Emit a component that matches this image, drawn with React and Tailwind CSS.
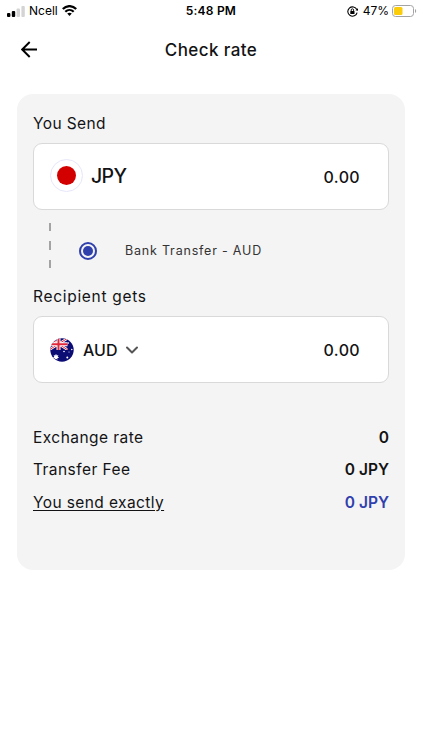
import { ChevronDown } from 'lucide-react'

const ROWS = [
  { label: 'Exchange rate', value: '0' },
  { label: 'Transfer Fee', value: '0 JPY' },
  { label: 'You send exactly', value: '0 JPY', highlight: true },
]

function StatusBar() {
  return (
    <div className="grid h-[22px] grid-cols-3 items-center text-black">
      <div className="flex items-center pl-[7px]">
        <svg width="18" height="11" viewBox="0 0 18 11">
          <rect x="0" y="7" width="3.4" height="4" rx="1" />
          <rect x="4.8" y="5" width="3.4" height="6" rx="1" />
          <rect x="9.6" y="2.5" width="3.4" height="8.5" rx="1" fill="#d4d4d4" />
          <rect x="14.4" y="0" width="3.4" height="11" rx="1" fill="#d4d4d4" />
        </svg>
        <span className="ml-1 text-[12px]">Ncell</span>
        <svg className="-mt-px ml-[4px]" width="15" height="11" viewBox="0 0 15 11" fill="none" stroke="#000" strokeWidth="2.2">
          <path d="M.8 4C4.6.1 10.4.1 14.2 4" />
          <path d="M3.3 6.7c2.4-2.3 6-2.3 8.4 0" />
          <path d="M7.5 11 5.2 8.6c1.3-1.2 3.3-1.2 4.6 0Z" fill="#000" stroke="none" />
        </svg>
      </div>
      <span className="text-center text-[12px] font-semibold tracking-[0.2px]">5:48 PM</span>
      <div className="flex items-center justify-end pr-[5px]">
        <svg width="11" height="11" viewBox="0 0 11 11" fill="none" stroke="#000">
          <path d="M9.8 3.6A4.7 4.7 0 1 0 10.1 6.6" strokeWidth="1.1" />
          <path d="m8.4 4.2 2.6.6V2.2Z" fill="#000" stroke="none" />
          <rect x="3.3" y="5" width="4.2" height="3.1" rx=".5" fill="#000" stroke="none" />
          <path d="M4.2 5V4a1.2 1.2 0 0 1 2.4 0v1" strokeWidth=".9" />
        </svg>
        <span className="ml-[5px] text-[12px]">47%</span>
        <svg className="-mt-px ml-[3px]" width="25" height="12" viewBox="0 0 25 12">
          <rect x=".5" y=".5" width="21" height="11" rx="3" fill="none" stroke="#a3a3a3" />
          <rect x="2" y="2" width="8.5" height="8" rx="1.5" fill="#fbcc0a" />
          <path d="M23 4v4c1.6-.6 1.6-3.4 0-4Z" fill="#a3a3a3" />
        </svg>
      </div>
    </div>
  )
}

function AustraliaFlag() {
  return (
    <svg width="24" height="24" viewBox="0 0 24 24">
      <clipPath id="au"><circle cx="12" cy="12" r="11.7" /></clipPath>
      <clipPath id="jack"><path d="M0 0h17.5v12H0z" /></clipPath>
      <g clipPath="url(#au)">
        <path fill="#0c0c75" d="M0 0h24v24H0z" />
        <g clipPath="url(#jack)">
          <path d="M-1 0 18 12M18 0-1 12" stroke="#fff" strokeWidth="2.4" />
          <path d="M-1 0 18 12M18 0-1 12" stroke="#e0263a" strokeWidth="1" />
          <path d="M8.5 0v12.5M0 6.3h18" stroke="#fff" strokeWidth="4" />
          <path d="M8.5 0v12.5M0 6.3h18" stroke="#e0263a" strokeWidth="2" />
        </g>
        <path fill="#fff" d="m6 15.8.8 1.6 1.7-.4-.8 1.6 1.4 1.1-1.7.4v1.7L6 20.7l-1.4 1.1v-1.7l-1.7-.4 1.4-1.1-.8-1.6 1.7.4Z" />
        <g fill="#fff">
          <circle cx="18.3" cy="5" r=".8" />
          <circle cx="14" cy="13.5" r=".8" />
          <circle cx="21.8" cy="11.5" r=".8" />
          <circle cx="19" cy="14" r=".5" />
          <circle cx="17.3" cy="19.5" r="1" />
        </g>
      </g>
    </svg>
  )
}

function AmountBox({ children }) {
  return (
    <div className="flex h-[67px] items-center justify-between rounded-[9px] border border-[#d9d9d9] bg-white pl-4 pr-[28px]">
      {children}
      <span className="text-[16px] font-medium tracking-[0.35px]">0.00</span>
    </div>
  )
}

export default function App() {
  return (
    <main className="h-[750px] bg-white font-['Inter',sans-serif] text-[#131315]">
      <StatusBar />
      <header className="grid h-14 grid-cols-[1fr_auto_1fr] items-center">
        <svg className="mb-[2px] ml-[21px]" width="17" height="17" viewBox="0 0 17 17" fill="none" stroke="#000" strokeWidth="1.9">
          <path d="M16 8.5H1.5M8.7 1 1.2 8.5 8.7 16" />
        </svg>
        <h1 className="pt-[2px] text-[17px] font-medium tracking-[0.4px]">Check rate</h1>
      </header>

      <section className="mx-[17px] mt-4 h-[476px] rounded-[16px] bg-[#f4f4f4] px-4 pt-[18px]">
        <h2 className="h-[31px] text-[15.5px] leading-6 tracking-[0.4px]">You Send</h2>
        <AmountBox>
          <div className="flex items-center gap-2 pb-[2px]">
            <span className="flex size-[33px] items-center justify-center rounded-full border border-[#e6e6fa]">
              <span className="size-[19px] rounded-full bg-[#d30000]" />
            </span>
            <span className="pt-[2px] text-[19.5px] font-medium tracking-[-0.6px]">JPY</span>
          </div>
        </AmountBox>

        <div className="flex h-[75px] items-center">
          <div className="mb-[4px] ml-4 flex flex-col gap-[10px]">
            <span className="h-[8.5px] w-[2px] bg-[#a3a3a3]" />
            <span className="h-[8.5px] w-[2px] bg-[#a3a3a3]" />
            <span className="h-[8.5px] w-[2px] bg-[#a3a3a3]" />
          </div>
          <span className="ml-7 mt-[6px] flex size-[18px] items-center justify-center rounded-full border-2 border-[#2f40ad]">
            <span className="size-[10px] rounded-full bg-[#2f40ad]" />
          </span>
          <span className="ml-7 mt-[8px] text-[12.5px] tracking-[0.8px] text-[#333]">Bank Transfer - AUD</span>
        </div>

        <h2 className="h-[31px] text-[15.5px] leading-6 tracking-[0.7px]">Recipient gets</h2>
        <AmountBox>
          <div className="flex items-center">
            <AustraliaFlag />
            <span className="ml-[9px] text-[16px] font-medium">AUD</span>
            <ChevronDown className="ml-[5px] size-5 text-[#555]" strokeWidth={2.4} />
          </div>
        </AmountBox>

        <dl className="mt-[38px]">
          {ROWS.map((row) => (
            <div key={row.label} className="flex h-[32.5px] items-center justify-between">
              <dt className={row.highlight ? 'text-[15.5px] tracking-[0.4px] underline underline-offset-2' : 'text-[15.5px] tracking-[0.45px]'}>
                {row.label}
              </dt>
              <dd className={row.highlight ? 'text-[15.5px] font-semibold text-[#3040ad]' : 'text-[15.5px] font-semibold'}>
                {row.value}
              </dd>
            </div>
          ))}
        </dl>
      </section>
    </main>
  )
}
